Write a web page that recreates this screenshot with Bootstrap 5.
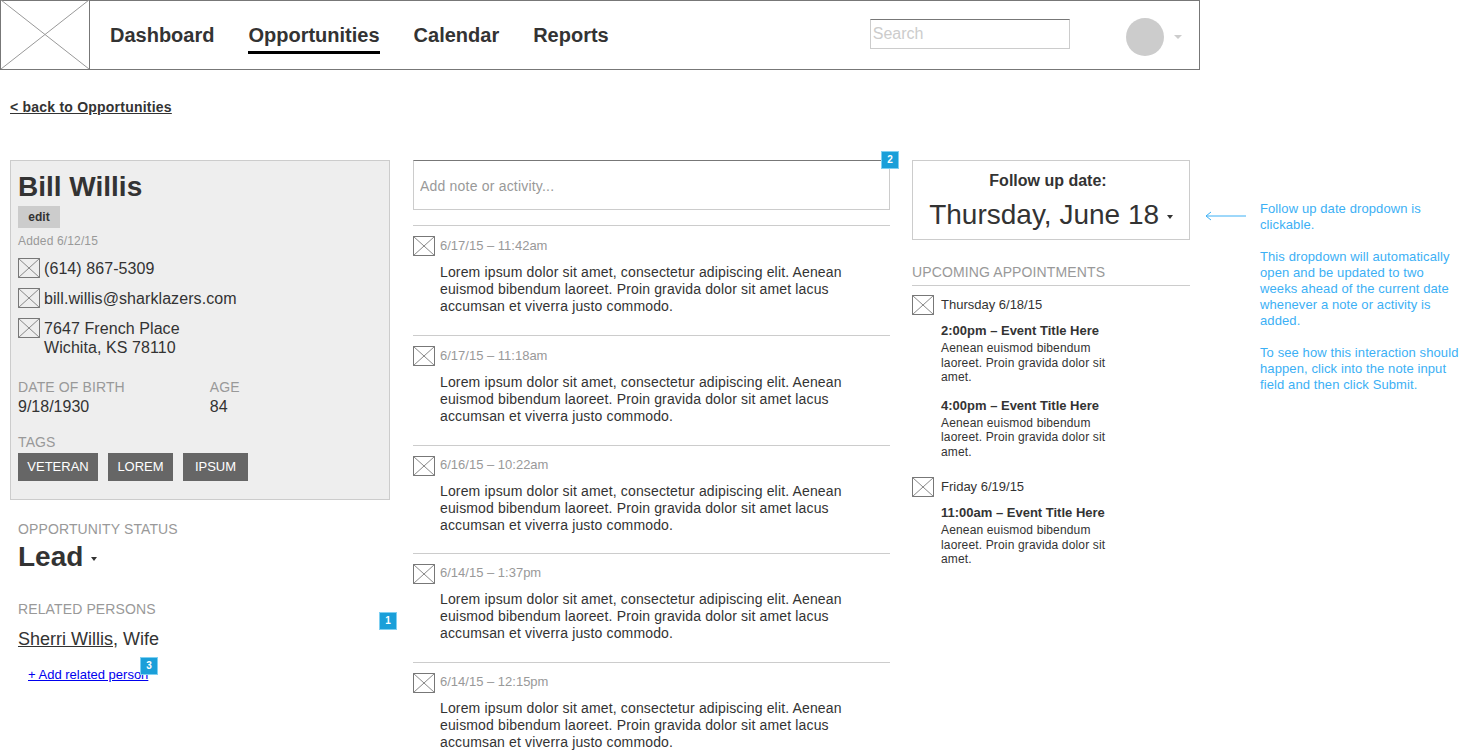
<!DOCTYPE html>
<html lang="en">
<head>
  <meta charset="UTF-8" />
  <meta name="viewport" content="width=device-width, initial-scale=1.0" />
  <title>Opportunity - Bill Willis</title>
  <link href="https://cdn.jsdelivr.net/npm/bootstrap@5.3.0/dist/css/bootstrap.min.css" rel="stylesheet" />
  <style>
    html, body { overflow: hidden; }
    body {
      font-family: "Liberation Sans", Arial, sans-serif;
      color: #333;
      background: #fff;
      font-size: 14px;
      line-height: 17px;
    }

    /* Top bar */
    .top-bar { width: 1200px; height: 70px; border: 1px solid #777; }
    .logo-box { width: 89px; height: 69px; border-right: 1px solid #777; margin-top: -1px; flex: none; }
    .logo-box svg { display: block; width: 88px; height: 69px; }
    .top-links { margin-left: 20px; gap: 34px; height: 68px; }
    .top-link { color: #333; font-size: 20px; font-weight: 700; line-height: 24px; text-decoration: none; padding-top: 22px; height: 53px; }
    .top-link.on { border-bottom: 3px solid #000; }
    .search-box { width: 200px; height: 30px; margin-left: 261px; margin-top: -2px; border: 1px solid #ccc; border-top: 1px solid #777; font-size: 16px; padding: 0 2px; color: #333; }
    .search-box::placeholder { color: #ccc; }
    .avatar { width: 38px; height: 38px; background: #ccc; border-radius: 50%; margin-left: 56px; margin-top: 4px; }
    .nav-caret { border-top: 4px solid #ccc; border-left: 4px solid transparent; border-right: 4px solid transparent; margin-left: 10px; margin-top: 3px; }

    .back-link { display: block; color: #333; font-weight: 700; font-size: 14px; line-height: 17px; letter-spacing: .22px; margin: 29px 0 0 10px; width: 162px; white-space: nowrap; }

    /* Columns */
    .page-cols { margin: 44px 0 0 10px; }
    .left-col { width: 380px; flex: none; }
    .mid-col { width: 477px; margin-left: 23px; flex: none; }
    .right-col { width: 278px; margin-left: 22px; flex: none; }
    .side-notes { width: 200px; margin-left: 70px; padding-top: 41px; color: #3cb0f5; font-size: 13px; line-height: 16px; letter-spacing: .1px; position: relative; flex: none; }

    /* Wireframe image placeholder */
    .ph-icon { width: 22px; height: 20px; flex: none; display: block; }

    .person-box { height: 340px; background: #eee; border: 1px solid #ccc; padding: 11px 7px 0; }
    .person-name { font-size: 28px; font-weight: 700; line-height: 30px; margin: 0; }
    .edit-btn { width: 42px; height: 22px; background: #ccc; font-size: 12px; font-weight: 700; line-height: 22px; text-align: center; margin-top: 4px; }
    .added-on { font-size: 12px; line-height: 14px; letter-spacing: .15px; color: #999; margin-top: 6px; }
    .contact-row { font-size: 16px; line-height: 19px; letter-spacing: .08px; gap: 4px; margin-top: 10px; }
    .addr-lines { padding-top: 1px; }
    .grey-label { color: #999; font-size: 14px; line-height: 17px; letter-spacing: .12px; text-transform: uppercase; }
    .birth-row { margin-top: 22px; }
    .birth-age { margin-left: 85px; }
    .plain-val { font-size: 16px; line-height: 19px; margin-top: 1px; }
    .tag-label { margin-top: 18px; }
    .tag-row { gap: 10px; margin-top: 2px; }
    .tag-pill { height: 28px; background: #666; color: #fff; font-size: 13px; line-height: 28px; text-align: center; }
    .tag-w80 { width: 80px; }
    .tag-w65 { width: 65px; }

    .status-block { margin: 21px 0 0 8px; }
    .status-val { font-size: 28px; font-weight: 700; line-height: 32px; margin-top: 3px; }
    .caret-dark { display: inline-block; border-top: 4px solid #333; border-left: 3.5px solid transparent; border-right: 3.5px solid transparent; vertical-align: middle; }
    .related-block { margin: 28px 0 0 8px; }
    .related-val { font-size: 18px; line-height: 21px; margin-top: 11px; }
    .related-val a { color: #333; }
    .add-person { display: inline-block; color: #00e; font-size: 13px; line-height: 16px; margin: 17px 0 0 10px; }

    /* Notes */
    .note-input { display: block; width: 100%; height: 50px; border: 1px solid #ccc; border-top: 1px solid #777; font-size: 14px; letter-spacing: .2px; padding: 2px 6px 0; }
    .note-input::placeholder { color: #999; }
    .note-row { border-top: 1px solid #ccc; padding-top: 10px; height: 110px; }
    .note-row.short-row { height: 108px; }
    .note-row.mid-row { height: 109px; }
    .note-list { margin-top: 15px; }
    .note-date { color: #999; font-size: 13px; line-height: 20px; gap: 5px; height: 20px; }
    .note-text { margin: 8px 0 0 27px; width: 415px; font-size: 14px; line-height: 17px; letter-spacing: .15px; }
    .tight-row .note-date span { padding-bottom: 2px; }
    .tight-row .note-text { margin-top: 7px; }

    /* Right column */
    .follow-box { height: 80px; border: 1px solid #ccc; text-align: center; padding-top: 10px; }
    .follow-title { font-size: 16px; font-weight: 700; line-height: 19px; padding-right: 6px; }
    .follow-date { font-size: 28px; line-height: 36px; margin-top: 7px; }
    .upcoming-label { margin-top: 24px; padding-bottom: 4px; border-bottom: 1px solid #ccc; }
    .day-row { font-size: 13px; line-height: 20px; gap: 7px; }
    .day-first { margin-top: 9px; }
    .day-next { margin-top: 18px; }
    .event-block { margin: 8px 0 0 29px; width: 175px; }
    .event-next { margin-top: 13px; }
    .event-title { font-size: 13px; font-weight: 700; line-height: 16px; }
    .event-text { font-size: 12px; line-height: 14.5px; letter-spacing: .15px; margin-top: 2px; }

    /* Numbered markers */
    .num-flag { position: absolute; width: 18px; height: 18px; background: #1a9fd9; border: 1px solid #7fd0f2; color: #fff; font-size: 10px; font-weight: 700; line-height: 16px; text-align: center; }
    .flag-one { left: 379px; top: 612px; }
    .flag-two { left: 881px; top: 151px; }
    .flag-three { left: 140px; top: 657px; }
    .arrow-svg { position: absolute; left: -55px; top: 50px; width: 42px; height: 12px; }
  </style>
</head>
<body>
  <svg width="0" height="0" class="position-absolute">
    <symbol id="xbox" viewBox="0 0 22 20" preserveAspectRatio="none">
      <rect x="0.5" y="0.5" width="21" height="19" fill="none" stroke="#777" />
      <path d="M0.5 0.5 21.5 19.5M21.5 0.5 0.5 19.5" fill="none" stroke="#888" />
    </symbol>
  </svg>

  <!-- Top bar -->
  <nav class="top-bar d-flex align-items-center">
    <div class="logo-box">
      <svg viewBox="0 0 88 69"><path d="M0 0 88 69M88 0 0 69" fill="none" stroke="#999" /></svg>
    </div>
    <div class="top-links d-flex">
      <a class="top-link" href="#">Dashboard</a>
      <a class="top-link on" href="#">Opportunities</a>
      <a class="top-link" href="#">Calendar</a>
      <a class="top-link" href="#">Reports</a>
    </div>
    <input class="search-box" type="text" placeholder="Search" />
    <div class="avatar"></div>
    <div class="nav-caret"></div>
  </nav>

  <a class="back-link" href="#">&lt; back to Opportunities</a>

  <div class="page-cols d-flex">
    <!-- Person details -->
    <div class="left-col">
      <div class="person-box">
        <h1 class="person-name">Bill Willis</h1>
        <div class="edit-btn">edit</div>
        <div class="added-on">Added 6/12/15</div>
        <div class="contact-row d-flex align-items-center"><svg class="ph-icon"><use href="#xbox" /></svg><span>(614) 867-5309</span></div>
        <div class="contact-row d-flex align-items-center"><svg class="ph-icon"><use href="#xbox" /></svg><span>bill.willis@sharklazers.com</span></div>
        <div class="contact-row d-flex align-items-start"><svg class="ph-icon"><use href="#xbox" /></svg><span class="addr-lines">7647 French Place<br />Wichita, KS 78110</span></div>
        <div class="birth-row d-flex">
          <div>
            <div class="grey-label">Date of birth</div>
            <div class="plain-val">9/18/1930</div>
          </div>
          <div class="birth-age">
            <div class="grey-label">Age</div>
            <div class="plain-val">84</div>
          </div>
        </div>
        <div class="grey-label tag-label">Tags</div>
        <div class="tag-row d-flex">
          <div class="tag-pill tag-w80">VETERAN</div>
          <div class="tag-pill tag-w65">LOREM</div>
          <div class="tag-pill tag-w65">IPSUM</div>
        </div>
      </div>
      <div class="status-block">
        <div class="grey-label">Opportunity status</div>
        <div class="status-val">Lead <span class="caret-dark"></span></div>
      </div>
      <div class="related-block">
        <div class="grey-label">Related persons</div>
        <div class="related-val"><a href="#">Sherri Willis</a>, Wife</div>
        <a class="add-person" href="#">+ Add related person</a>
      </div>
    </div>

    <!-- Notes and activity -->
    <div class="mid-col">
      <input class="note-input" type="text" placeholder="Add note or activity..." />
      <div class="note-list">
        <div class="note-row">
          <div class="note-date d-flex align-items-center"><svg class="ph-icon"><use href="#xbox" /></svg><span>6/17/15 – 11:42am</span></div>
          <p class="note-text">Lorem ipsum dolor sit amet, consectetur adipiscing elit. Aenean euismod bibendum laoreet. Proin gravida dolor sit amet lacus accumsan et viverra justo commodo.</p>
        </div>
        <div class="note-row">
          <div class="note-date d-flex align-items-center"><svg class="ph-icon"><use href="#xbox" /></svg><span>6/17/15 – 11:18am</span></div>
          <p class="note-text">Lorem ipsum dolor sit amet, consectetur adipiscing elit. Aenean euismod bibendum laoreet. Proin gravida dolor sit amet lacus accumsan et viverra justo commodo.</p>
        </div>
        <div class="note-row short-row tight-row">
          <div class="note-date d-flex align-items-center"><svg class="ph-icon"><use href="#xbox" /></svg><span>6/16/15 – 10:22am</span></div>
          <p class="note-text">Lorem ipsum dolor sit amet, consectetur adipiscing elit. Aenean euismod bibendum laoreet. Proin gravida dolor sit amet lacus accumsan et viverra justo commodo.</p>
        </div>
        <div class="note-row mid-row tight-row">
          <div class="note-date d-flex align-items-center"><svg class="ph-icon"><use href="#xbox" /></svg><span>6/14/15 – 1:37pm</span></div>
          <p class="note-text">Lorem ipsum dolor sit amet, consectetur adipiscing elit. Aenean euismod bibendum laoreet. Proin gravida dolor sit amet lacus accumsan et viverra justo commodo.</p>
        </div>
        <div class="note-row tight-row">
          <div class="note-date d-flex align-items-center"><svg class="ph-icon"><use href="#xbox" /></svg><span>6/14/15 – 12:15pm</span></div>
          <p class="note-text">Lorem ipsum dolor sit amet, consectetur adipiscing elit. Aenean euismod bibendum laoreet. Proin gravida dolor sit amet lacus accumsan et viverra justo commodo.</p>
        </div>
      </div>
    </div>

    <!-- Follow up and appointments -->
    <div class="right-col">
      <div class="follow-box">
        <div class="follow-title">Follow up date:</div>
        <div class="follow-date">Thursday, June 18 <span class="caret-dark"></span></div>
      </div>
      <div class="grey-label upcoming-label">Upcoming appointments</div>
      <div class="day-row d-flex align-items-center day-first"><svg class="ph-icon"><use href="#xbox" /></svg>Thursday 6/18/15</div>
      <div class="event-block">
        <div class="event-title">2:00pm – Event Title Here</div>
        <div class="event-text">Aenean euismod bibendum laoreet. Proin gravida dolor sit amet.</div>
      </div>
      <div class="event-block event-next">
        <div class="event-title">4:00pm – Event Title Here</div>
        <div class="event-text">Aenean euismod bibendum laoreet. Proin gravida dolor sit amet.</div>
      </div>
      <div class="day-row d-flex align-items-center day-next"><svg class="ph-icon"><use href="#xbox" /></svg>Friday 6/19/15</div>
      <div class="event-block">
        <div class="event-title">11:00am – Event Title Here</div>
        <div class="event-text">Aenean euismod bibendum laoreet. Proin gravida dolor sit amet.</div>
      </div>
    </div>

    <!-- Annotation -->
    <div class="side-notes">
      <svg class="arrow-svg" viewBox="0 0 42 12"><path d="M1 6H41M6 2 1 6 6 10" fill="none" stroke="#3cb0f5" /></svg>
      Follow up date dropdown is clickable.<br /><br />
      This dropdown will automatically open and be updated to two weeks ahead of the current date whenever a note or activity is added.<br /><br />
      To see how this interaction should happen, click into the note input field and then click Submit.
    </div>
  </div>

  <div class="num-flag flag-one">1</div>
  <div class="num-flag flag-two">2</div>
  <div class="num-flag flag-three">3</div>

  <script src="https://cdn.jsdelivr.net/npm/bootstrap@5.3.0/dist/js/bootstrap.bundle.min.js"></script>
</body>
</html>
